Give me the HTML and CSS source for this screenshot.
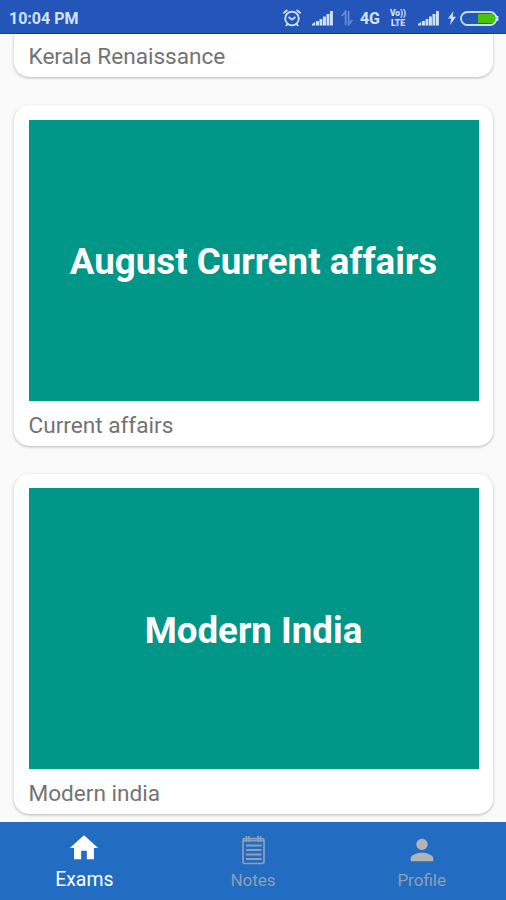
FILE: index.html
```html
<!DOCTYPE html>
<html lang="en">
  <head>
    <meta charset="UTF-8" />
    <meta name="viewport" content="width=device-width, initial-scale=1.0" />
    <title>Exams</title>
    <link rel="stylesheet" href="styles.css">
  </head>
  <body>
    <div class="app">
      <header class="status-bar">
        <span class="time">10:04 PM</span>
        <div class="status-icons">
          <!-- alarm -->
          <svg class="alarm" width="20" height="20" viewBox="0 0 20 20" fill="none" stroke="currentColor">
            <circle cx="10" cy="10.5" r="6.8" stroke-width="1.8" />
            <path d="M6.6 9l3.4 2.7 3.4-2.7" stroke-width="1.7" />
            <path d="M1.4 5.2l4-3.2M18.6 5.2l-4-3.2M5.5 16l-1.6 2M14.5 16l1.6 2" stroke-width="1.8" />
          </svg>
          <svg class="signal" width="21" height="16" viewBox="0 0 21 16" fill="currentColor">
            <path d="M0 15.5v-1.500l3.200-2v3.500zM4 11h2.900v4.500H4zM7.500 9h2.900v6.500H7.500zM11 6.500h2.900v9H11zM14.500 4h2.900v11.500h-2.900zM18 1h2.900v14.500H18z" />
          </svg>
          <svg class="data" width="12" height="16" viewBox="0 0 12 16" fill="none" stroke="currentColor" stroke-width="1.7">
            <path d="M4.6 15V1.500L.8 6M7.600 1v13.500l3.800-4.500" />
          </svg>
          <span class="network">4G</span>
          <span class="volte"><span>Vo))</span><span>LTE</span></span>
          <svg class="signal" width="21" height="16" viewBox="0 0 21 16" fill="currentColor">
            <path d="M0 15.5v-1.500l3.200-2v3.500zM4 11h2.900v4.500H4zM7.500 9h2.900v6.500H7.500zM11 6.500h2.900v9H11zM14.500 4h2.900v11.500h-2.900zM18 1h2.900v14.500H18z" />
          </svg>
          <svg class="bolt" width="8" height="14" viewBox="0 0 8 14" fill="currentColor">
            <path d="M5.500 0L0 7.600h3.300L2 14l6-8.200H4.600z" />
          </svg>
          <svg class="battery" width="39" height="15" viewBox="0 0 39 15">
            <path d="M18 3h14.500a4.500 4.500 0 0 1 0 9H18z" fill="#48c50b" />
            <rect x="1" y="1" width="35.500" height="13" rx="6.500" fill="none" stroke="#c9dcfa" stroke-width="1.800" />
            <path d="M37.600 5v5" stroke="#c9dcfa" stroke-width="1.600" />
          </svg>
        </div>
      </header>

      <main class="feed">
        <div class="card">
          <p class="card-label">Kerala Renaissance</p>
        </div>
        <div class="card">
          <div class="cover">August Current affairs</div>
          <p class="card-label">Current affairs</p>
        </div>
        <div class="card">
          <div class="cover">Modern India</div>
          <p class="card-label">Modern india</p>
        </div>
      </main>

      <nav class="bottom-nav">
        <a class="nav-item active">
          <svg width="34" height="34" viewBox="0 0 24 24" fill="currentColor">
            <path d="M10 20v-6h4v6h5v-8h3L12 3 2 12h3v8z" />
          </svg>
          <span>Exams</span>
        </a>
        <a class="nav-item">
          <svg width="34" height="34" viewBox="0 0 34 34" fill="none" stroke="currentColor">
            <rect x="7" y="5.500" width="21" height="25" rx="1.500" stroke-width="1.700" />
            <path d="M10 12.500h15.500M10 17h15.500M10 21.500h15.500M10 26h15.500" stroke-width="2" />
            <path d="M7 7.500h21" stroke-width="2" />
            <path d="M10.500 3v6M13 3v6M22 3v6M24.500 3v6" stroke-width="1.600" />
          </svg>
          <span>Notes</span>
        </a>
        <a class="nav-item profile">
          <svg width="34" height="34" viewBox="0 0 24 24" fill="currentColor">
            <path d="M12 12c2.210 0 4-1.790 4-4s-1.790-4-4-4-4 1.790-4 4 1.790 4 4 4zm0 2c-2.670 0-8 1.340-8 4v2h16v-2c0-2.660-5.330-4-8-4z" />
          </svg>
          <span>Profile</span>
        </a>
      </nav>
    </div>
  </body>
</html>
```

FILE: styles.css
```css
* {
  box-sizing: border-box;
}
body {
  margin: 0;
  font-family: Roboto, "Liberation Sans", sans-serif;
  background-color: #fafafa;
}
.app {
  display: flex;
  flex-direction: column;
  height: 900px;
  overflow: hidden;
}
.status-bar {
  display: flex;
  flex: none;
  align-items: center;
  justify-content: space-between;
  height: 34px;
  padding: 3px 7px 0 9px;
  color: #d3e2fb;
  background-color: #2455b8;
  border-bottom: 1px solid #0d3aa8;
}
.time {
  font-size: 16px;
  font-weight: 700;
}
.status-icons {
  display: flex;
  align-items: center;
}
.signal {
  margin-left: 10px;
}
.data {
  margin-left: 8px;
  color: #6b8fd6;
}
.network {
  margin-left: 7px;
  font-size: 16px;
  font-weight: 700;
}
.volte {
  display: flex;
  flex-direction: column;
  align-items: center;
  width: 18px;
  margin-left: 9px;
  margin-right: 1px;
  font-size: 8.5px;
  font-weight: 900;
  line-height: 10px;
}
.bolt {
  margin-left: 9px;
}
.battery {
  margin-left: 4px;
}
.feed {
  display: flex;
  flex: 1;
  flex-direction: column;
  justify-content: flex-end;
  gap: 28px;
  min-height: 0;
  padding: 0 13px 8px 14px;
  overflow: hidden;
}
.card {
  flex: none;
  padding: 14.5px;
  padding-bottom: 0;
  background-color: #fff;
  border-radius: 15px;
  box-shadow: 0 1px 3px rgba(0, 0, 0, 0.28);
}
.cover {
  display: flex;
  align-items: center;
  justify-content: center;
  height: 281px;
  padding-top: 3px;
  color: #fff;
  background-color: #009688;
  font-size: 36.7px;
  font-weight: 700;
}
.card-label {
  height: 45px;
  margin: 0;
  color: #737373;
  font-size: 22.6px;
  line-height: 49px;
}
.bottom-nav {
  display: flex;
  flex: none;
  height: 78px;
  background-color: #226dc1;
}
.nav-item {
  display: flex;
  flex: 1;
  flex-direction: column;
  align-items: center;
  padding-top: 11px;
  color: #8f9fb5;
  font-size: 17px;
  line-height: 27px;
}
.profile svg {
  color: #b3b3b3;
}
.nav-item.active {
  gap: 1px;
  padding-top: 9px;
  color: #fff;
  font-size: 19.4px;
}
```
